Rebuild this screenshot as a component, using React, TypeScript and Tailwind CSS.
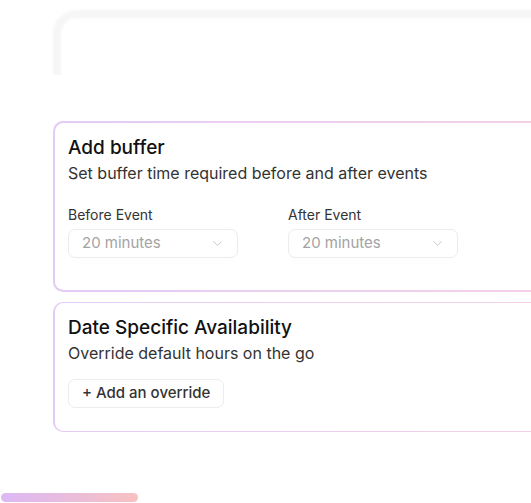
import { ChevronDown } from "lucide-react";

const font = { fontFamily: "Inter, 'Open Sans', sans-serif" };

function GradientCard({ children, className }: { children: React.ReactNode; className?: string }) {
  return (
    <div className="w-[540px] rounded-[10px] bg-gradient-to-r from-[#e4cbf6] via-[#ecd0ef] to-[#f6d0e4] p-[1.5px]">
      <div className={`rounded-[8.5px] bg-white pl-[13.5px] ${className ?? ""}`}>{children}</div>
    </div>
  );
}

function Select({ value }: { value: string }) {
  return (
    <div className="flex h-[29px] w-[170px] items-center justify-between rounded-[7px] border border-[#ececec] pl-[13px] pr-[12px]">
      <span className="text-[15px] text-[#a3a3a3]">{value}</span>
      <ChevronDown className="h-[15px] w-[15px] text-[#b8b8b8]" strokeWidth={1.25} />
    </div>
  );
}

export default function App() {
  return (
    <div className="relative h-[503px] w-[531px] overflow-hidden bg-white" style={font}>
      {/* faded card behind */}
      <div className="absolute left-[53px] top-[10px] h-[140px] w-[620px] rounded-[24px] border-[8px] border-[#f6f6f6] blur-[1px]" />
      <div className="absolute left-[15px] top-[75px] h-[400px] w-[620px] rounded-[28px] bg-white" />

      <div className="relative flex flex-col gap-[10px] pl-[53px] pt-[121px]">
        <GradientCard className="pb-[32.5px] pt-[12px]">
          <h2 className="text-[19px] leading-[26px] font-medium text-[#111]">Add buffer</h2>
          <p className="text-[16px] leading-[24px] text-[#333]">
            Set buffer time required before and after events
          </p>
          <div className="mt-[20px] flex gap-[50px]">
            <div className="flex flex-col gap-[4px]">
              <span className="text-[14px] leading-[20px] text-[#333]">Before Event</span>
              <Select value="20 minutes" />
            </div>
            <div className="flex flex-col gap-[4px]">
              <span className="text-[14px] leading-[20px] text-[#333]">After Event</span>
              <Select value="20 minutes" />
            </div>
          </div>
        </GradientCard>

        <GradientCard className="pb-[23px] pt-[12px]">
          <h2 className="text-[19px] leading-[26px] font-medium text-[#111]">
            Date Specific Availability
          </h2>
          <p className="text-[16px] leading-[24px] text-[#333]">Override default hours on the go</p>
          <button className="mt-[13.5px] flex h-[29px] items-center rounded-[7px] border border-[#ececec] px-[13px] text-[15px] font-medium text-[#333]">
            + Add an override
          </button>
        </GradientCard>
      </div>

      <div className="absolute bottom-[1px] left-[1px] h-[9px] w-[137px] rounded-full bg-gradient-to-r from-[#dcb8f5] to-[#f8c0c0]" />
    </div>
  );
}
